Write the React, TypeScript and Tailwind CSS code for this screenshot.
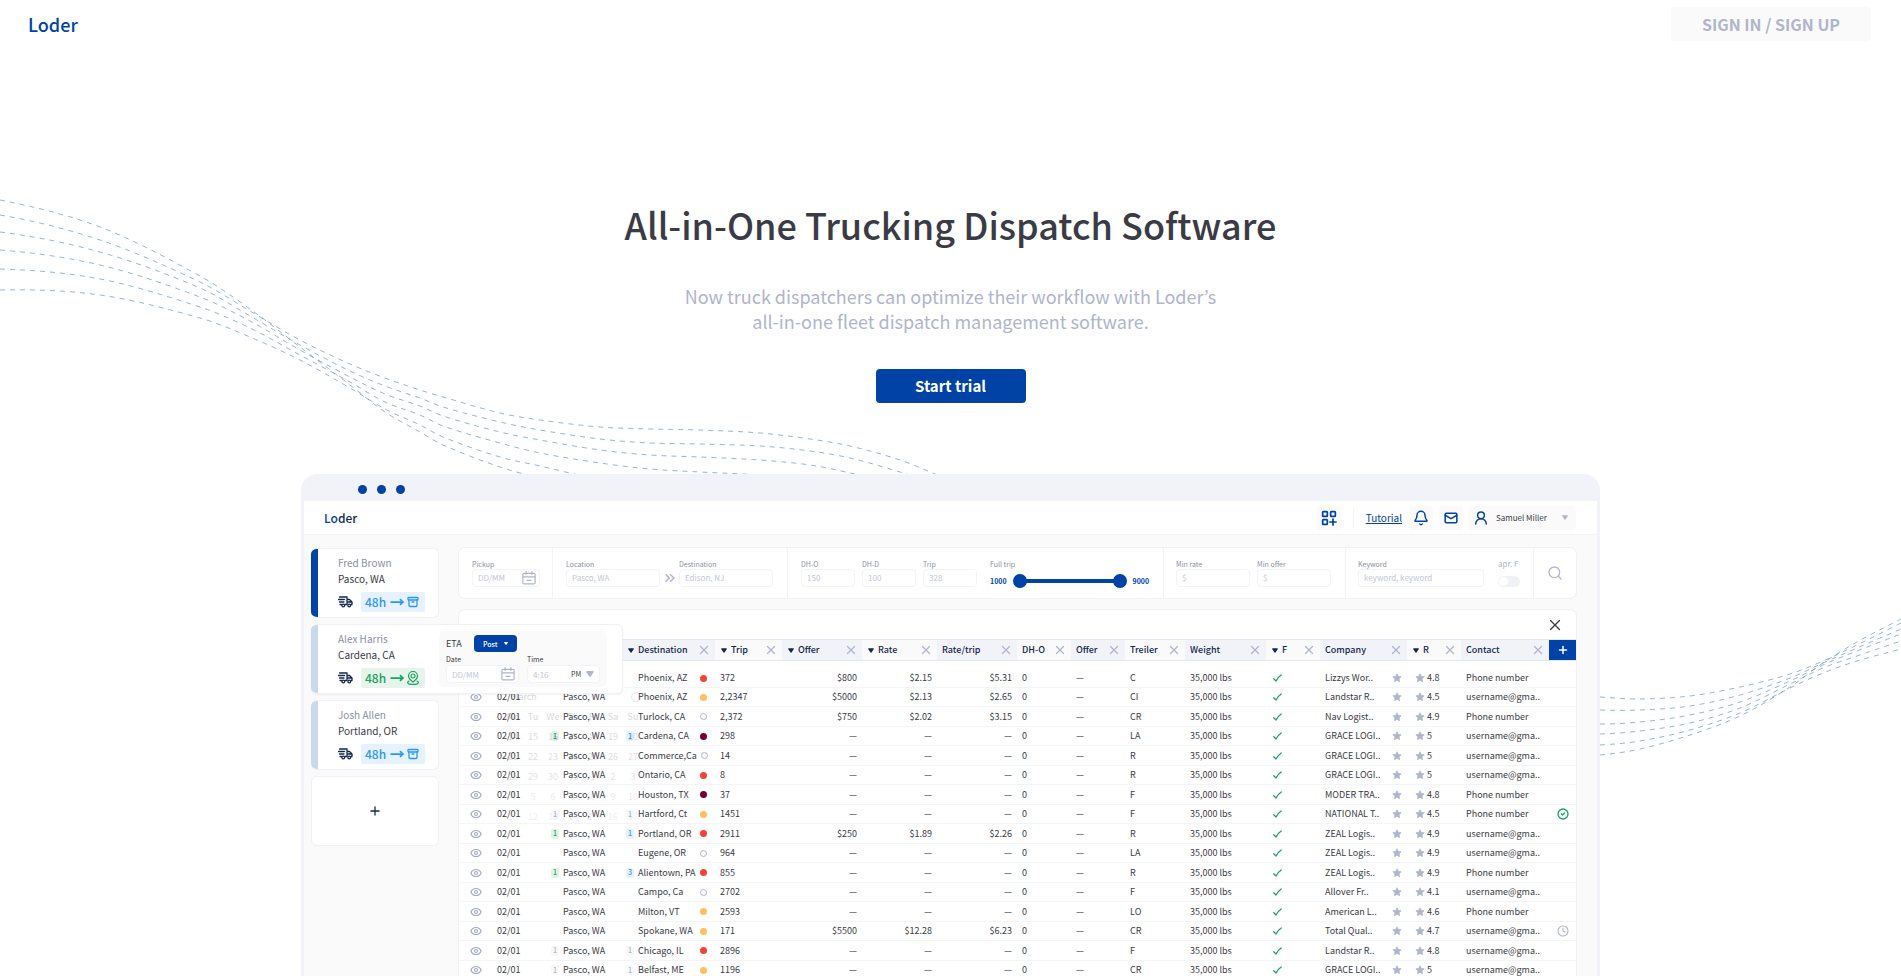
import type { ReactNode } from "react";
import { Archive, Bell, ChevronsRight, CircleCheck, Clock, Eye, Mail, MoveRight, Plus, Search, UserRound, X } from "lucide-react";
import clsx from "clsx";

/* ---------- Decorative waves ---------- */

const LEFT_X = [0, 100, 200, 250, 300, 350, 385, 420, 443, 500, 540, 600, 650, 700, 760, 810, 850, 900, 940];
const LEFT_WAVES = [
  [200, 227, 276, 309, 347, 385, 412, 432, 445, 467, 478, 492],
  [215, 240, 282, 311, 340, 364, 378, 390, 397, 413, 420, 427, 429, 430, 433, 439, 446, 460, 476],
  [232, 252, 288, 316, 345, 371, 386, 398, 407, 422, 430, 439, 443, 444, 446, 451, 458, 472, 486],
  [250, 265, 297, 321, 350, 377, 394, 406, 416, 432, 440, 450, 455, 457, 460, 465, 473, 486],
  [269, 279, 307, 328, 355, 382, 402, 415, 426, 443, 453, 463, 469, 472, 475, 480],
  [290, 295, 318, 337, 360, 388, 409, 425, 437, 457, 466, 480, 490],
];

const RIGHT_X = [1600, 1640, 1690, 1740, 1790, 1823, 1857, 1901];
const RIGHT_WAVES = [
  [697, 699, 696, 687, 674, 661, 645, 623],
  [710, 710, 706, 695, 678, 663, 648, 629],
  [724, 722, 715, 702, 681, 665, 651, 634],
  [734, 731, 723, 708, 684, 668, 656, 641],
  [745, 741, 730, 713, 688, 673, 661, 649],
  [755, 749, 735, 716, 687, 663, 642, 619],
];

/* Edge slopes of each bundle, so that the curves leave the page at an angle. */
const LEFT_SLOPES = [0.2, 0.17, 0.13, 0.08, 0.03, -0.02];

function smoothPath(xs: number[], ys: number[], startSlope: number) {
  const pts = ys.map((y, i) => [xs[i], y]);
  const slope = (i: number) => {
    if (i === 0) return startSlope;
    const a = pts[i - 1];
    const b = pts[i + 1] ?? pts[i];
    return (b[1] - a[1]) / (b[0] - a[0]);
  };
  let d = `M${pts[0][0]} ${pts[0][1]}`;
  for (let i = 0; i < pts.length - 1; i++) {
    const [x1, y1] = pts[i];
    const [x2, y2] = pts[i + 1];
    const w = (x2 - x1) / 3;
    d += ` C${x1 + w} ${y1 + slope(i) * w} ${x2 - w} ${y2 - slope(i + 1) * w} ${x2} ${y2}`;
  }
  return d;
}

function Waves() {
  return (
    <>
      <svg className="pointer-events-none absolute top-0 left-0" width="950" height="500" fill="none" stroke="#0042A5" strokeOpacity="0.4" strokeDasharray="5 5" aria-hidden="true">
        {LEFT_WAVES.map((ys, i) => <path key={i} d={smoothPath(LEFT_X, ys, LEFT_SLOPES[i])} />)}
      </svg>
      <svg className="pointer-events-none absolute top-0 right-0" width="311" height="800" viewBox="1590 0 311 800" fill="none" stroke="#0042A5" strokeOpacity="0.4" strokeDasharray="5 5" aria-hidden="true">
        {RIGHT_WAVES.map((ys, i) => <path key={i} d={smoothPath(RIGHT_X, ys, 0.06 - i * 0.03)} />)}
      </svg>
    </>
  );
}

/* ---------- Small icons ---------- */

function Triangle({ className }: { className?: string }) {
  return (
    <svg viewBox="0 0 8 6" className={clsx("shrink-0", className)} fill="currentColor" aria-hidden="true">
      <path d="M1 0h6a.8.8 0 0 1 .6 1.300L4.700 5.500a.8.8 0 0 1-1.300 0L.4 1.300A.8.8 0 0 1 1 0Z" />
    </svg>
  );
}

function TruckIcon() {
  return (
    <svg viewBox="0 0 30 24" className="h-3 w-[15px] text-[#14284b]" fill="none" stroke="currentColor" strokeWidth="2.600" strokeLinecap="round" strokeLinejoin="round" aria-hidden="true">
      <path d="M3 2h15v15h-4M1 7h12M3 12h9M4 17h3M18 7h5l5 5v5h-2M18 12h9" />
      <circle cx="10.500" cy="19" r="2.800" />
      <circle cx="22.500" cy="19" r="2.800" />
    </svg>
  );
}

function PinIcon() {
  return (
    <svg viewBox="0 0 24 28" className="h-[14px] w-3" fill="none" stroke="currentColor" strokeWidth="2.400" strokeLinecap="round" aria-hidden="true">
      <path d="M12 22c-4.500-3.200-9-6.500-9-12a9 9 0 0 1 18 0c0 5.500-4.500 8.800-9 12Z" />
      <circle cx="12" cy="10" r="4" />
      <path d="M4 20c-2 .8-2.700 1.800-2.700 2.800C1.300 25 6 26.700 12 26.700s10.700-1.700 10.700-3.900c0-1-.7-2-2.700-2.800" />
    </svg>
  );
}

function AppsIcon() {
  return (
    <svg viewBox="0 0 24 24" className="size-4" fill="none" stroke="currentColor" strokeWidth="2.600" strokeLinecap="round" aria-hidden="true">
      <rect x="2.500" y="2.500" width="7" height="7" rx="1" />
      <rect x="14.500" y="2.500" width="7" height="7" rx="1" />
      <rect x="2.500" y="14.500" width="7" height="7" rx="1" />
      <path d="M18 13.500v9M13.500 18h9" />
    </svg>
  );
}

function CalendarIcon() {
  return (
    <svg viewBox="0 0 24 24" className="size-[14px] shrink-0 text-[#b0b4cd]" fill="none" stroke="currentColor" strokeWidth="2" strokeLinecap="round" aria-hidden="true">
      <rect x="1.500" y="4" width="21" height="18" rx="2" />
      <path d="M2 10h20M7 1v5M17 1v5M8.500 16h7" />
    </svg>
  );
}

function StarIcon() {
  return (
    <svg viewBox="0 0 20 20" className="size-[10px] shrink-0 text-[#b0b4cd]" fill="currentColor" stroke="currentColor" strokeWidth="1.500" strokeLinejoin="round" aria-hidden="true">
      <path d="m10 1.500 2.500 5.300 5.800.7-4.200 4 1 5.900-5.100-2.800-5.100 2.800 1-5.900-4.200-4 5.800-.7Z" />
    </svg>
  );
}

function CheckMark() {
  return (
    <svg viewBox="0 0 18 16" className="h-2 w-[9px] text-[#1aa260]" fill="none" stroke="currentColor" strokeWidth="2.600" strokeLinecap="round" strokeLinejoin="round" aria-label="Yes">
      <path d="M1.500 9.500 6 14C8 9 12 5 16.500 2" />
    </svg>
  );
}

/* ---------- Sidebar ---------- */

function DriverInfo({ name, place, arrived }: { name: string; place: string; arrived?: boolean }) {
  return (
    <div className="w-[121px] pt-1.5 pl-5">
      <p className="text-[10px] leading-4 text-[#8c8fa5]">{name}</p>
      <p className="text-[10px] leading-4 text-[#3a3b45]">{place}</p>
      <div className="mt-[5px] flex items-center gap-2">
        <TruckIcon />
        <div className={clsx("flex h-5 w-16 items-center justify-between rounded-xs pr-1.5 pl-1 text-xs font-medium", arrived ? "bg-[#e6f4ec] text-[#1aa260]" : "bg-[#e6f3ff] text-[#2a97f5]")}>
          48h
          <MoveRight className="size-[14px]" strokeWidth={3} />
          {arrived ? <PinIcon /> : <Archive className="size-3" strokeWidth={2.6} />}
        </div>
      </div>
    </div>
  );
}

function DriverCard({ active, children, className }: { active?: boolean; children: ReactNode; className?: string }) {
  return (
    <div className={clsx("flex h-[70px] overflow-hidden rounded-md border border-l-0 border-[#f0f1f7] bg-white", className)}>
      <div className={clsx("w-[7px] shrink-0", active ? "bg-[#0042a5]" : "bg-[#cad8ec]")} />
      {children}
    </div>
  );
}

function Sidebar() {
  return (
    <aside className="flex w-32 shrink-0 flex-col gap-1.5">
      <DriverCard active>
        <DriverInfo name="Fred Brown" place="Pasco, WA" />
      </DriverCard>
      <div className="relative z-10 h-[70px]">
        <DriverCard className="absolute top-0 left-0 w-[312px] shadow-xs">
          <DriverInfo name="Alex Harris" place="Cardena, CA" arrived />
          <div className="my-1.5 w-[168px] rounded-md bg-[#fafafa] px-[7px] pt-1">
            <div className="flex items-center gap-3 text-[9px] leading-[14px] text-[#3a3b45]">
              ETA
              <button className="flex h-[17px] w-[43px] items-center justify-center gap-1.5 rounded-sm bg-[#0042a5] text-[7px] font-medium text-white">
                Post <Triangle className="h-[3px] w-1" />
              </button>
            </div>
            <div className="mt-0.5 flex gap-2 text-[7px] leading-[11px] text-[#3a3b45]">
              <div className="w-[73px]">
                <label htmlFor="eta-date" className="block">Date</label>
                <div className="flex h-[18px] items-center rounded-sm border border-[#f2f3f8] bg-white px-[3px]">
                  <input id="eta-date" placeholder="DD/MM" className="w-full min-w-0 pl-0.5 text-[8px] outline-none placeholder:text-[#c3c6d9]" />
                  <CalendarIcon />
                </div>
              </div>
              <div className="w-[73px]">
                <label htmlFor="eta-time" className="block">Time</label>
                <div className="flex h-[18px] items-center rounded-sm border border-[#f2f3f8] bg-white px-[5px]">
                  <input id="eta-time" placeholder="4:16" className="w-full min-w-0 text-[8px] outline-none placeholder:text-[#c3c6d9]" />
                  <select aria-label="Period" className="w-[15px] shrink-0 appearance-none outline-none">
                    <option>PM</option>
                    <option>AM</option>
                  </select>
                  <Triangle className="h-1.5 w-2 text-[#b0b4cd]" />
                </div>
              </div>
            </div>
          </div>
        </DriverCard>
      </div>
      <DriverCard>
        <DriverInfo name="Josh Allen" place="Portland, OR" />
      </DriverCard>
      <button aria-label="Add driver" className="flex h-[70px] items-center justify-center rounded-md border border-[#f0f1f7] bg-white text-[#14284b]">
        <Plus className="size-[14px]" strokeWidth={2.2} />
      </button>
    </aside>
  );
}

/* ---------- Filters ---------- */

function Field({ id, label, placeholder, className, icon }: { id: string; label: string; placeholder: string; className: string; icon?: ReactNode }) {
  return (
    <div className={className}>
      <label htmlFor={id} className="block text-[7px] leading-[10px] text-[#8c8fa5]">{label}</label>
      <div className="flex h-[18px] items-center rounded-sm border border-[#f2f3f8] bg-white px-[3px]">
        <input id={id} placeholder={placeholder} className="w-full min-w-0 pl-0.5 text-[8px] outline-none placeholder:text-[#c3c6d9]" />
        {icon}
      </div>
    </div>
  );
}

const RANGE_CLASS =
  "pointer-events-none absolute inset-0 m-0 h-full w-full appearance-none bg-transparent [&::-webkit-slider-thumb]:pointer-events-auto [&::-webkit-slider-thumb]:size-[14px] [&::-webkit-slider-thumb]:appearance-none [&::-webkit-slider-thumb]:rounded-full [&::-webkit-slider-thumb]:bg-[#0042a5]";

function Filters() {
  return (
    <form className="flex h-[50px] items-stretch rounded-md bg-white ring-1 ring-[#f0f1f7]">
      <div className="flex w-[94px] items-center border-r border-[#f2f3f8] pl-[13px]">
        <Field id="pickup" label="Pickup" placeholder="DD/MM" className="w-[68px]" icon={<CalendarIcon />} />
      </div>
      <div className="flex w-[235px] items-center justify-between border-r border-[#f2f3f8] pr-[14px] pl-[13px]">
        <Field id="location" label="Location" placeholder="Pasco, WA" className="w-[94px]" />
        <ChevronsRight className="mt-2.5 size-4 text-[#b0b4cd]" strokeWidth={2.2} />
        <Field id="destination" label="Destination" placeholder="Edison, NJ" className="w-[94px]" />
      </div>
      <div className="flex w-[376px] items-center gap-[7px] border-r border-[#f2f3f8] pl-[13px]">
        <Field id="dho" label="DH-O" placeholder="150" className="w-[54px]" />
        <Field id="dhd" label="DH-D" placeholder="100" className="w-[54px]" />
        <Field id="trip" label="Trip" placeholder="328" className="w-[54px]" />
        <fieldset className="ml-1.5">
          <legend className="text-[7px] leading-[10px] text-[#8c8fa5]">Full trip</legend>
          <div className="flex h-[18px] items-center gap-1.5 pt-1.5 text-[7px] font-bold text-[#0042a5]">
            1000
            <div className="relative flex h-[14px] w-[114px] items-center">
              <div className="mx-1 h-1 grow bg-[#0042a5]" />
              <input type="range" aria-label="Shortest trip" min="1000" max="9000" defaultValue="1000" className={RANGE_CLASS} />
              <input type="range" aria-label="Longest trip" min="1000" max="9000" defaultValue="9000" className={RANGE_CLASS} />
            </div>
            9000
          </div>
        </fieldset>
      </div>
      <div className="flex w-[182px] items-center gap-[7px] border-r border-[#f2f3f8] pl-3">
        <Field id="min-rate" label="Min rate" placeholder="$" className="w-[74px]" />
        <Field id="min-offer" label="Min offer" placeholder="$" className="w-[74px]" />
      </div>
      <div className="flex w-[188px] items-center gap-[14px] border-r border-[#f2f3f8] pl-3">
        <Field id="keyword" label="Keyword" placeholder="keyword, keyword" className="w-[126px]" />
        <div>
          <label htmlFor="approved" className="block text-[8px] leading-[10px] text-[#b0b4cd]">apr. F</label>
          <div className="flex h-[18px] items-center pt-1.5">
            <input id="approved" type="checkbox" className="flex h-[11px] w-[22px] appearance-none rounded-full bg-[#f0f1f7] p-px before:size-[9px] before:rounded-full before:bg-white" />
          </div>
        </div>
      </div>
      <button type="button" aria-label="Search" className="flex grow items-center justify-center text-[#b0b4cd]">
        <Search className="size-4" strokeWidth={2} />
      </button>
    </form>
  );
}

/* ---------- Loads table ---------- */

type Column = { label: string; width: string; sort?: boolean };

const COLUMNS: Column[] = [
  { label: "Destination", width: "w-[93px]", sort: true },
  { label: "Trip", width: "w-[67px]", sort: true },
  { label: "Offer", width: "w-20", sort: true },
  { label: "Rate", width: "w-[75px]", sort: true },
  { label: "Rate/trip", width: "w-20" },
  { label: "DH-O", width: "w-[54px]" },
  { label: "Offer", width: "w-[54px]" },
  { label: "Treiler", width: "w-[60px]" },
  { label: "Weight", width: "w-[81px]" },
  { label: "F", width: "w-[54px]", sort: true },
  { label: "Company", width: "w-[87px]" },
  { label: "R", width: "w-[54px]", sort: true },
  { label: "Contact", width: "w-[88px]" },
];

const DOTS = {
  red: "bg-[#f44336]",
  amber: "bg-[#ffc060]",
  wine: "bg-[#750037]",
  open: "border border-[#b0b4cd] bg-white",
};

const BADGES = {
  green: "bg-[#e1f3e9] text-[#1aa260]",
  blue: "bg-[#e6f3ff] text-[#2a97f5]",
  gray: "bg-[#f8f8fb] text-[#b0b4cd]",
};

type Badge = [string, keyof typeof BADGES];

type Load = {
  to: string;
  dot: keyof typeof DOTS;
  trip: string;
  money?: [string, string, string];
  trailer: string;
  company: string;
  rating: string;
  phone?: boolean;
  from?: Badge;
  dest?: Badge;
  status?: "done" | "waiting";
};

const LOADS: Load[] = [
  { to: "Phoenix, AZ", dot: "red", trip: "372", money: ["$800", "$2.15", "$5.31"], trailer: "C", company: "Lizzys Wor..", rating: "4.8", phone: true },
  { to: "Phoenix, AZ", dot: "amber", trip: "2,2347", money: ["$5000", "$2.13", "$2.65"], trailer: "CI", company: "Landstar R..", rating: "4.5" },
  { to: "Turlock, CA", dot: "open", trip: "2,372", money: ["$750", "$2.02", "$3.15"], trailer: "CR", company: "Nav Logist..", rating: "4.9", phone: true },
  { to: "Cardena, CA", dot: "wine", trip: "298", trailer: "LA", company: "GRACE LOGI..", rating: "5", from: ["1", "green"], dest: ["1", "blue"] },
  { to: "Commerce,Ca", dot: "open", trip: "14", trailer: "R", company: "GRACE LOGI..", rating: "5" },
  { to: "Ontario, CA", dot: "red", trip: "8", trailer: "R", company: "GRACE LOGI..", rating: "5" },
  { to: "Houston, TX", dot: "wine", trip: "37", trailer: "F", company: "MODER TRA..", rating: "4.8", phone: true },
  { to: "Hartford, Ct", dot: "amber", trip: "1451", trailer: "F", company: "NATIONAL T..", rating: "4.5", phone: true, from: ["1", "gray"], dest: ["1", "gray"], status: "done" },
  { to: "Portland, OR", dot: "red", trip: "2911", money: ["$250", "$1.89", "$2.26"], trailer: "R", company: "ZEAL Logis..", rating: "4.9", from: ["1", "green"], dest: ["1", "blue"] },
  { to: "Eugene, OR", dot: "open", trip: "964", trailer: "LA", company: "ZEAL Logis..", rating: "4.9" },
  { to: "Alientown, PA", dot: "red", trip: "855", trailer: "R", company: "ZEAL Logis..", rating: "4.9", phone: true, from: ["1", "green"], dest: ["3", "blue"] },
  { to: "Campo, Ca", dot: "open", trip: "2702", trailer: "F", company: "Allover Fr..", rating: "4.1" },
  { to: "Milton, VT", dot: "amber", trip: "2593", trailer: "LO", company: "American L..", rating: "4.6", phone: true },
  { to: "Spokane, WA", dot: "amber", trip: "171", money: ["$5500", "$12.28", "$6.23"], trailer: "CR", company: "Total Qual..", rating: "4.7", status: "waiting" },
  { to: "Chicago, IL", dot: "red", trip: "2896", trailer: "F", company: "Landstar R..", rating: "4.8", from: ["1", "gray"], dest: ["1", "gray"] },
  { to: "Belfast, ME", dot: "amber", trip: "1196", trailer: "CR", company: "GRACE LOGI..", rating: "5", from: ["1", "gray"], dest: ["1", "gray"] },
];

function CountBadge({ badge }: { badge?: Badge }) {
  return (
    <span className={clsx("flex h-[10px] w-2 shrink-0 items-center justify-center rounded-xs text-[7px] leading-none font-medium", badge && BADGES[badge[1]])}>
      {badge?.[0]}
    </span>
  );
}

function LoadsTable() {
  return (
    <table className="w-full table-fixed border-separate border-spacing-0 text-left text-[9px] leading-3 whitespace-nowrap text-[#3a3b45]">
      <thead>
        <tr className="h-[22px] text-[#14284b] *:border-y *:border-[#e2e7f0] *:p-0">
          <th className="w-[33px] bg-[#fafafa]" aria-label="Seen" />
          <th className="w-14 bg-[#f2f3f8]" aria-label="Date" />
          <th className="w-[74px] bg-[#fafafa]" aria-label="Origin" />
          {COLUMNS.map((c, i) => (
            <th key={i} className={clsx("font-medium", c.width, i % 2 ? "bg-[#fafafa]" : "bg-[#f2f3f8]")}>
              <div className={clsx("flex items-center pr-1", c.sort ? "pl-1.5" : "pl-[5px]")}>
                {c.sort && <Triangle className="mr-1 h-[5px] w-1.5" />}
                <span className="grow">{c.label}</span>
                <button aria-label={`Remove ${c.label}`} className="text-[#b0b4cd]">
                  <X className="size-[14px]" strokeWidth={2.2} />
                </button>
              </div>
            </th>
          ))}
          <th className="w-[27px] bg-[#0042a5]">
            <button aria-label="Add column" className="flex w-full justify-center text-white">
              <Plus className="size-3" strokeWidth={3} />
            </button>
          </th>
        </tr>
      </thead>
      <tbody>
        {LOADS.map((l, i) => (
          <tr key={i} className="*:border-b *:border-[#f4f5f9] *:px-[5px] *:py-0 first:h-[27px] first:*:pt-2 not-first:odd:h-5 even:h-[19px]">
            <td><Eye className="ml-1.5 size-3 text-[#a3a8c6]" strokeWidth={2.4} /></td>
            <td>02/01</td>
            <td>
              <div className="-ml-0.5 flex items-center gap-1">
                <CountBadge badge={l.from} /> Pasco, WA
              </div>
            </td>
            <td>
              <div className="-ml-px flex items-center gap-1">
                <CountBadge badge={l.dest} />
                <span className="grow">{l.to}</span>
                <span className={clsx("mr-[3px] size-[7px] shrink-0 rounded-full", DOTS[l.dot])} />
              </div>
            </td>
            <td>{l.trip}</td>
            <td className="text-right">{l.money?.[0] ?? "—"}</td>
            <td className="text-right">{l.money?.[1] ?? "—"}</td>
            <td className="text-right">{l.money?.[2] ?? "—"}</td>
            <td>0</td>
            <td>—</td>
            <td>{l.trailer}</td>
            <td>35,000 lbs</td>
            <td><div className="pl-0.5"><CheckMark /></div></td>
            <td>
              <div className="flex items-center justify-between">
                {l.company} <StarIcon />
              </div>
            </td>
            <td>
              <div className="flex items-center gap-0.5 pl-[3px]">
                <StarIcon /> {l.rating}
              </div>
            </td>
            <td>{l.phone ? "Phone number" : "username@gma.."}</td>
            <td>
              {l.status === "done" && <CircleCheck className="ml-[3px] size-3 text-[#1aa260]" strokeWidth={2.6} />}
              {l.status === "waiting" && <Clock className="ml-[3px] size-3 text-[#b0b4cd]" strokeWidth={2.2} />}
            </td>
          </tr>
        ))}
      </tbody>
    </table>
  );
}

const WEEKS = [
  { days: ["Mo", "Tu", "We", "Th", "Fr", "Sa", "Su"], tone: "opacity-100" },
  { days: ["14", "15", "16", "17", "18", "19", "20"], tone: "opacity-90" },
  { days: ["21", "22", "23", "24", "25", "26", "27"], tone: "opacity-80" },
  { days: ["28", "29", "30", "31", "1", "2", "3"], tone: "opacity-70" },
  { days: ["4", "5", "6", "7", "8", "9", "10"], tone: "opacity-50" },
  { days: ["11", "12", "13", "14", "15", "16", "17"], tone: "opacity-40" },
];

/* Month picker fading out under the ETA form. */
function GhostCalendar() {
  return (
    <div className="pointer-events-none absolute top-[77px] left-9 w-[156px] px-2 text-[9px] text-[#3a3b45] opacity-20" aria-hidden="true">
      <div className="flex h-5 items-center justify-between pl-2">
        March
        <span className="mr-0.5 size-[10px] rounded-full border border-[#8c8fa5]" />
      </div>
      {WEEKS.map((w, i) => (
        <div key={i} className={clsx("grid h-5 grid-cols-7 items-center text-center", w.tone)}>
          {w.days.map((d) => <span key={d}>{d}</span>)}
        </div>
      ))}
    </div>
  );
}

/* ---------- Product window ---------- */

function AppHeader() {
  return (
    <div className="flex h-[34px] items-center border-b border-[#f2f3f8] bg-white pr-[21px] pl-5 text-[#0042a5]">
      <p className="grow text-xs font-medium">Lo<span className="text-[#14284b]">der</span></p>
      <button aria-label="Apps" className="flex size-6 items-center justify-center rounded-sm bg-[#fafafa]"><AppsIcon /></button>
      <div className="mx-3 h-5 w-px bg-[#f2f3f8]" />
      <a href="#tutorial" className="mr-[7px] text-[10px] underline">Tutorial</a>
      <button aria-label="Notifications" className="mr-1.5 flex size-6 items-center justify-center rounded-sm bg-[#fafafa]"><Bell className="size-4" strokeWidth={2.2} /></button>
      <button aria-label="Messages" className="mr-1.5 flex size-6 items-center justify-center rounded-sm bg-[#fafafa]"><Mail className="size-[14px]" strokeWidth={2.6} /></button>
      <button className="flex h-6 w-[107px] items-center rounded-sm bg-[#fafafa] pr-2 pl-1 text-[8px] text-[#3a3b45]">
        <UserRound className="mr-[7px] size-4 text-[#0042a5]" strokeWidth={2.2} />
        <span className="grow text-left">Samuel Miller</span>
        <Triangle className="h-[5px] w-1.5 text-[#b0b4cd]" />
      </button>
    </div>
  );
}

function ProductWindow() {
  return (
    <div className="relative w-full max-w-[1299px] overflow-hidden rounded-t-2xl border-x-3 border-[#f2f3f8] bg-[#fafafa]">
      <div className="flex h-[27px] items-center gap-[10px] bg-[#f2f3f8] pt-1 pl-[54px]">
        <span className="size-[9px] rounded-full bg-[#0042a5]" />
        <span className="size-[9px] rounded-full bg-[#0042a5]" />
        <span className="size-[9px] rounded-full bg-[#0042a5]" />
      </div>
      <AppHeader />
      <div className="flex gap-5 pt-[13px] pr-[21px] pb-8 pl-[7px]">
        <Sidebar />
        <main className="min-w-0 grow">
          <Filters />
          <section className="relative mt-3 rounded-t-md bg-white ring-1 ring-[#f0f1f7]">
            <div className="flex h-[29px] items-center justify-end pr-3">
              <button aria-label="Close" className="text-[#3a3b45]"><X className="size-[18px]" strokeWidth={1.8} /></button>
            </div>
            <LoadsTable />
            <GhostCalendar />
          </section>
        </main>
      </div>
    </div>
  );
}

export default function App() {
  return (
    <div className="relative h-screen overflow-hidden bg-white font-['Noto_Sans_CJK_KR',sans-serif]">
      <Waves />
      <header className="flex h-12 items-center justify-between pr-[30px] pl-7">
        <a href="#home" className="text-lg font-medium text-[#0042a5]">Loder</a>
        <a href="#sign-in" className="flex h-[34px] w-[200px] items-center justify-center rounded-sm bg-[#fafafa] text-base font-bold text-[#b0b4cd]">SIGN IN / SIGN UP</a>
      </header>
      <div className="flex flex-col items-center pt-[148px]">
        <h1 className="text-4xl leading-14 font-medium text-[#3a3b45]">All-in-One Trucking Dispatch Software</h1>
        <p className="mt-8 text-center text-lg leading-[25px] text-[#b0b4cd]">
          Now truck dispatchers can optimize their workflow with Loder’s
          <br />
          all-in-one fleet dispatch management software.
        </p>
        <button className="mt-[35px] mb-[71px] h-[34px] w-[150px] rounded-sm bg-[#0042a5] text-[15px] font-bold text-white">Start trial</button>
        <ProductWindow />
      </div>
    </div>
  );
}
